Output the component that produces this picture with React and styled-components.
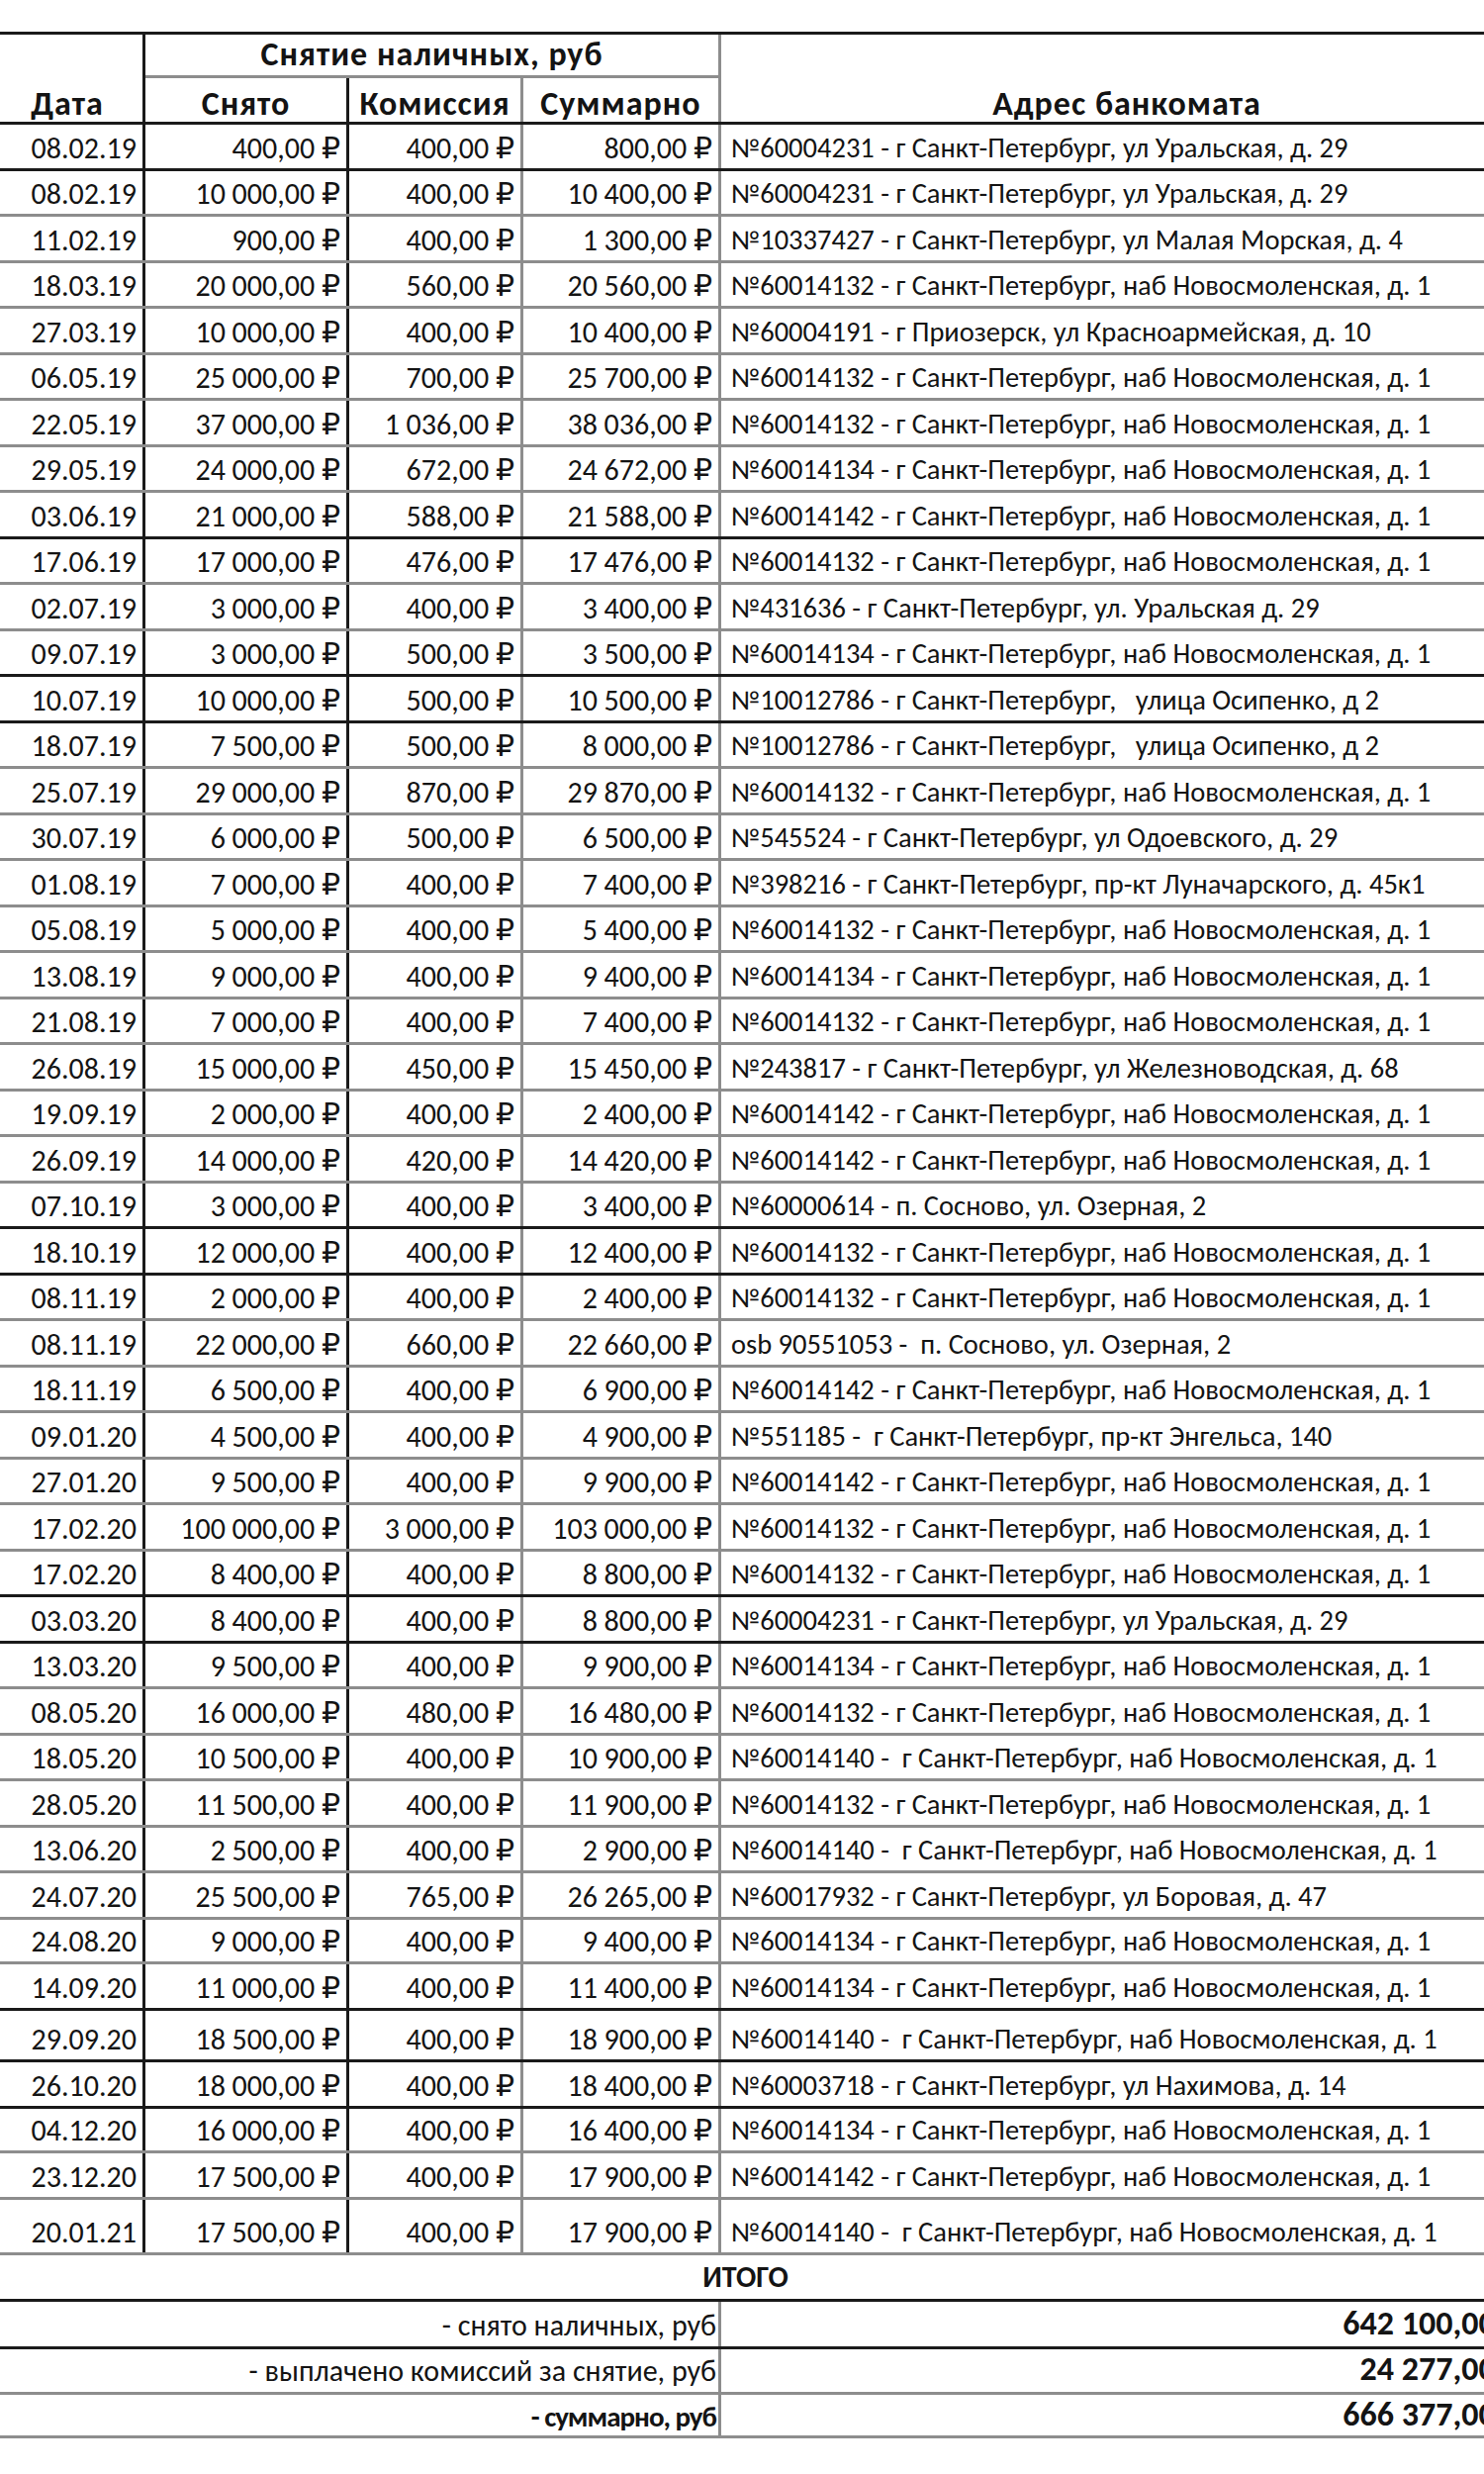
import React from "react"
import styled, { createGlobalStyle } from "styled-components"

const BLACK = "#1a1a1a"
const GRAY = "#8d8d8d"
const COLS = "147px 206px 176px 200px 820px"

const GlobalStyle = createGlobalStyle`
  html, body {
    margin: 0;
    padding: 0;
    background: #fff;
    overflow: hidden;
  }
  body {
    font-family: Carlito, Lato, "Open Sans", "DejaVu Sans", sans-serif;
    color: #141414;
  }
`

const Sheet = styled.div`
  width: 1549px;
  padding-top: 32px;
`

const HeaderGrid = styled.div`
  display: grid;
  grid-template-columns: ${COLS};
  grid-template-rows: 44px 44px;
  border-top: 3px solid ${BLACK};
  border-bottom: 3px solid ${BLACK};
`

const HeadCell = styled.div`
  box-sizing: border-box;
  grid-column: ${({ $col }) => $col};
  grid-row: ${({ $row }) => $row};
  display: flex;
  align-items: flex-end;
  justify-content: center;
  padding: 0 ${({ $shift }) => $shift || 0}px ${({ $under }) => ($under ? 3 : 0)}px 0;
  font-size: 34px;
  font-weight: 700;
  letter-spacing: 1px;
  line-height: 1.1;
  border-right: ${({ $line }) => ($line ? `3px solid ${$line}` : "none")};
  border-bottom: ${({ $under }) => ($under ? `3px solid ${$under}` : "none")};
`

const Row = styled.div`
  display: grid;
  grid-template-columns: ${COLS};
  box-sizing: border-box;
  height: ${({ $h }) => $h}px;
  border-bottom: 3px solid ${({ $edge }) => ($edge === "b" ? BLACK : GRAY)};
`

const Cell = styled.div`
  box-sizing: border-box;
  display: flex;
  align-items: flex-end;
  justify-content: ${({ $left }) => ($left ? "flex-start" : "flex-end")};
  padding: ${({ $left }) => ($left ? "0 0 3px 10px" : "0 6px 2px 0")};
  font-size: ${({ $left }) => ($left ? "28.5px" : "30px")};
  line-height: 1.2;
  white-space: pre;
  overflow: hidden;
  border-right: ${({ $line }) => ($line ? `3px solid ${$line}` : "none")};
`

const TotalTitle = styled.div`
  box-sizing: border-box;
  height: 47px;
  display: flex;
  align-items: flex-end;
  justify-content: center;
  padding: 0 42px 4px 0;
  font-size: 30px;
  font-weight: 700;
  line-height: 1.2;
  border-bottom: 3px solid ${BLACK};
`

const TotalRow = styled.div`
  display: grid;
  grid-template-columns: 729px 820px;
  box-sizing: border-box;
  height: ${({ $h }) => $h}px;
  border-bottom: 3px solid ${({ $edge }) => ($edge === "b" ? BLACK : GRAY)};
`

const TotalLabel = styled.div`
  box-sizing: border-box;
  display: flex;
  align-items: flex-end;
  justify-content: flex-end;
  padding: 0 2px 3px 0;
  font-size: ${({ $strong }) => ($strong ? "29px" : "30px")};
  font-weight: ${({ $strong }) => ($strong ? 700 : 400)};
  letter-spacing: ${({ $strong }) => ($strong ? "-1px" : "0")};
  line-height: 1.2;
  border-right: 3px solid ${GRAY};
`

const TotalValue = styled.div`
  display: flex;
  align-items: flex-end;
  justify-content: flex-end;
  padding: 0 6px 2px 0;
  font-size: 34px;
  font-weight: 700;
  line-height: 1.2;
  white-space: pre;
`

const NS = "№60014132 - г Санкт-Петербург, наб Новосмоленская, д. 1"
const nab = (id) => `№${id} - г Санкт-Петербург, наб Новосмоленская, д. 1`
const nab2 = (id) => `№${id} -  г Санкт-Петербург, наб Новосмоленская, д. 1`
const URAL = "№60004231 - г Санкт-Петербург, ул Уральская, д. 29"
const OSIP = "№10012786 - г Санкт-Петербург,   улица Осипенко, д 2"

// [дата, снято, комиссия, адрес, нижняя граница, высота]
const rows = [
  ["08.02.19", 400, 400, URAL, "b"],
  ["08.02.19", 10000, 400, URAL, "g"],
  ["11.02.19", 900, 400, "№10337427 - г Санкт-Петербург, ул Малая Морская, д. 4", "g"],
  ["18.03.19", 20000, 560, NS, "g"],
  ["27.03.19", 10000, 400, "№60004191 - г Приозерск, ул Красноармейская, д. 10", "g"],
  ["06.05.19", 25000, 700, NS, "g"],
  ["22.05.19", 37000, 1036, NS, "g"],
  ["29.05.19", 24000, 672, nab("60014134"), "g"],
  ["03.06.19", 21000, 588, nab("60014142"), "b"],
  ["17.06.19", 17000, 476, NS, "g"],
  ["02.07.19", 3000, 400, "№431636 - г Санкт-Петербург, ул. Уральская д. 29", "g"],
  ["09.07.19", 3000, 500, nab("60014134"), "b"],
  ["10.07.19", 10000, 500, OSIP, "b"],
  ["18.07.19", 7500, 500, OSIP, "g"],
  ["25.07.19", 29000, 870, NS, "g"],
  ["30.07.19", 6000, 500, "№545524 - г Санкт-Петербург, ул Одоевского, д. 29", "g"],
  ["01.08.19", 7000, 400, "№398216 - г Санкт-Петербург, пр-кт Луначарского, д. 45к1", "g"],
  ["05.08.19", 5000, 400, NS, "g"],
  ["13.08.19", 9000, 400, nab("60014134"), "g"],
  ["21.08.19", 7000, 400, NS, "g"],
  ["26.08.19", 15000, 450, "№243817 - г Санкт-Петербург, ул Железноводская, д. 68", "g"],
  ["19.09.19", 2000, 400, nab("60014142"), "g"],
  ["26.09.19", 14000, 420, nab("60014142"), "g"],
  ["07.10.19", 3000, 400, "№60000614 - п. Сосново, ул. Озерная, 2", "b"],
  ["18.10.19", 12000, 400, NS, "b"],
  ["08.11.19", 2000, 400, NS, "g"],
  ["08.11.19", 22000, 660, "osb 90551053 -  п. Сосново, ул. Озерная, 2", "g"],
  ["18.11.19", 6500, 400, nab("60014142"), "g"],
  ["09.01.20", 4500, 400, "№551185 -  г Санкт-Петербург, пр-кт Энгельса, 140", "g"],
  ["27.01.20", 9500, 400, nab("60014142"), "g"],
  ["17.02.20", 100000, 3000, NS, "g"],
  ["17.02.20", 8400, 400, NS, "b"],
  ["03.03.20", 8400, 400, URAL, "b"],
  ["13.03.20", 9500, 400, nab("60014134"), "g"],
  ["08.05.20", 16000, 480, NS, "g"],
  ["18.05.20", 10500, 400, nab2("60014140"), "g"],
  ["28.05.20", 11500, 400, NS, "g"],
  ["13.06.20", 2500, 400, nab2("60014140"), "g"],
  ["24.07.20", 25500, 765, "№60017932 - г Санкт-Петербург, ул Боровая, д. 47", "g"],
  ["24.08.20", 9000, 400, nab("60014134"), "g", 45],
  ["14.09.20", 11000, 400, nab("60014134"), "b", 47],
  ["29.09.20", 18500, 400, nab2("60014140"), "b", 52],
  ["26.10.20", 18000, 400, "№60003718 - г Санкт-Петербург, ул Нахимова, д. 14", "b", 47],
  ["04.12.20", 16000, 400, nab("60014134"), "g", 45],
  ["23.12.20", 17500, 400, nab("60014142"), "g", 47],
  ["20.01.21", 17500, 400, nab2("60014140"), "g", 56],
]

const money = (n) => {
  const [int, dec] = n.toFixed(2).split(".")
  const grouped = int.replace(/\B(?=(\d{3})+(?!\d))/g, "\u00a0")
  return `${grouped},${dec}\u00a0₽`
}

const totalCash = rows.reduce((s, r) => s + r[1], 0)
const totalFee = rows.reduce((s, r) => s + r[2], 0)

const App = () => (
  <>
    <GlobalStyle />
    <Sheet>
      <HeaderGrid>
        <HeadCell $col="1" $row="1 / 3" $line={BLACK} $shift={8}>Дата</HeadCell>
        <HeadCell $col="2 / 5" $row="1" $line={GRAY} $under={GRAY}>
          Снятие наличных, руб
        </HeadCell>
        <HeadCell $col="2" $row="2" $line={BLACK}>Снято</HeadCell>
        <HeadCell $col="3" $row="2" $line={GRAY}>Комиссия</HeadCell>
        <HeadCell $col="4" $row="2" $line={GRAY}>Суммарно</HeadCell>
        <HeadCell $col="5" $row="1 / 3">Адрес банкомата</HeadCell>
      </HeaderGrid>

      {rows.map(([date, cash, fee, address, edge, h], i) => (
        <Row key={i} $edge={edge} $h={h || (i % 2 ? 46 : 47)}>
          <Cell $line={BLACK}>{date}</Cell>
          <Cell $line={BLACK}>{money(cash)}</Cell>
          <Cell $line={GRAY}>{money(fee)}</Cell>
          <Cell $line={GRAY}>{money(cash + fee)}</Cell>
          <Cell $left>{address}</Cell>
        </Row>
      ))}

      <TotalTitle>ИТОГО</TotalTitle>
      <TotalRow $edge="b" $h={48}>
        <TotalLabel>- снято наличных, руб</TotalLabel>
        <TotalValue>{money(totalCash)}</TotalValue>
      </TotalRow>
      <TotalRow $edge="g" $h={46}>
        <TotalLabel>- выплачено комиссий за снятие, руб</TotalLabel>
        <TotalValue>{money(totalFee)}</TotalValue>
      </TotalRow>
      <TotalRow $edge="g" $h={44}>
        <TotalLabel $strong>- суммарно, руб</TotalLabel>
        <TotalValue>{money(totalCash + totalFee)}</TotalValue>
      </TotalRow>
    </Sheet>
  </>
)

export default App
